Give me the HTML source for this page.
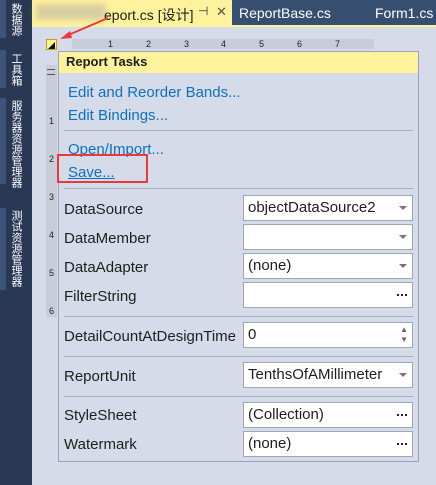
<!DOCTYPE html>
<html><head><meta charset="utf-8"><style>
*{margin:0;padding:0;box-sizing:border-box}
body{width:436px;height:485px;overflow:hidden;background:#d6dbe9;font-family:"Segoe UI","Liberation Sans","Noto Sans CJK SC",sans-serif;position:relative}
.a{position:absolute}
.side{left:0;top:0;width:32px;height:485px;background:#293955}
.st{left:0;width:6px;background:#3f5278}
.vt{left:11px;writing-mode:vertical-rl;color:#fff;font-size:11px;font-family:"Noto Sans CJK SC",sans-serif;line-height:12px}
.lbl{left:64px;font-size:15px;color:#1e1e1e}
.box{left:243px;width:170px;height:26px;background:#fff;border:1px solid #a0a8b8;font-size:15px;color:#1e1e1e;padding:3px 0 0 4px;line-height:18px}
.dd::after{content:"";position:absolute;right:5px;top:10px;border-left:4px solid transparent;border-right:4px solid transparent;border-top:4px solid #777}
.el::after{content:"";position:absolute;right:5px;top:11px;width:2px;height:2px;background:#222;box-shadow:-4px 0 #222,-8px 0 #222}
.sep{left:64px;width:349px;height:1px;background:#a8b0c0}
.lk{left:68px;font-size:15px;color:#0e70c0}
</style></head><body>
<div class="a side"></div>
<div class="a st" style="top:0;height:38px"></div>
<div class="a st" style="top:50px;height:38px"></div>
<div class="a st" style="top:98px;height:86px"></div>
<div class="a st" style="top:208px;height:82px"></div>
<div class="a vt" style="top:3px">数据源</div>
<div class="a vt" style="top:53px">工具箱</div>
<div class="a vt" style="top:100px">服务器资源管理器</div>
<div class="a vt" style="top:210px">测试资源管理器</div>
<div class="a" style="left:32px;top:0;width:404px;height:25px;background:#364e6f"></div>
<div class="a" style="left:32px;top:0;width:200px;height:25px;background:#fff29d"></div>
<div class="a" style="left:32px;top:25px;width:404px;height:2px;background:#fff29d"></div>
<div class="a" style="left:36px;top:4px;width:70px;height:16px;background:#d8cfa0;filter:blur(3px)"></div>
<div class="a" style="left:104px;top:5px;font-size:14px;color:#1e1e1e">eport.cs [设计]</div>
<div class="a" style="left:198px;top:4px;font-size:12px;color:#333">⊣</div>
<div class="a" style="left:216px;top:4px;font-size:13px;color:#555">✕</div>
<div class="a" style="left:239px;top:5px;font-size:14px;color:#fff">ReportBase.cs</div>
<div class="a" style="left:375px;top:5px;font-size:14px;color:#fff">Form1.cs</div>
<svg class="a" style="left:0;top:0" width="436" height="485"><line x1="108" y1="18" x2="66" y2="36" stroke="#e83a3a" stroke-width="2"/><polygon points="60,39 70,31 72,38" fill="#e83a3a"/></svg>
<div class="a" style="left:46px;top:39px;width:11px;height:11px;background:#fff29d;border:1px solid #c9a400"></div>
<div class="a" style="left:48px;top:42px;width:0;height:0;border-left:7px solid transparent;border-bottom:7px solid #111"></div>
<div class="a" style="left:72px;top:39px;width:302px;height:10px;background:#c8cdd9;font-size:9px;color:#222;line-height:10px;word-spacing:0">
<span style="position:absolute;left:36px">1</span><span style="position:absolute;left:74px">2</span><span style="position:absolute;left:112px">3</span><span style="position:absolute;left:149px">4</span><span style="position:absolute;left:187px">5</span><span style="position:absolute;left:225px">6</span><span style="position:absolute;left:263px">7</span></div>
<div class="a" style="left:46px;top:65px;width:11px;height:252px;background:#c8cdd9;font-size:9px;color:#222;text-align:center">
<div style="position:absolute;top:4px;left:1px;width:8px;height:6px;border-top:1px solid #555;border-bottom:1px solid #555"></div>
<span style="position:absolute;top:51px;left:3px">1</span><span style="position:absolute;top:89px;left:3px">2</span><span style="position:absolute;top:127px;left:3px">3</span><span style="position:absolute;top:165px;left:3px">4</span><span style="position:absolute;top:203px;left:3px">5</span><span style="position:absolute;top:241px;left:3px">6</span></div>
<div class="a" style="left:58px;top:51px;width:361px;height:411px;background:#d6dbe9;border:1px solid #9aa4b6"></div>
<div class="a" style="left:59px;top:52px;width:359px;height:21px;background:#fff29d;font-size:13px;font-weight:bold;color:#1e1e1e;padding:2px 0 0 7px">Report Tasks</div>
<div class="a lk" style="top:84px">Edit and Reorder Bands...</div>
<div class="a lk" style="top:107px">Edit Bindings...</div>
<div class="a sep" style="top:130px"></div>
<div class="a lk" style="top:141px">Open/Import...</div>
<div class="a lk" style="top:164px;text-decoration:underline">Save...</div>
<div class="a" style="left:57px;top:154px;width:91px;height:29px;border:2px solid #e83a3a"></div>
<div class="a sep" style="top:188px"></div>
<div class="a lbl" style="top:201px">DataSource</div><div class="a box dd" style="top:195px">objectDataSource2</div>
<div class="a lbl" style="top:230px">DataMember</div><div class="a box dd" style="top:224px"></div>
<div class="a lbl" style="top:259px">DataAdapter</div><div class="a box dd" style="top:253px">(none)</div>
<div class="a lbl" style="top:288px">FilterString</div><div class="a box el" style="top:282px"></div>
<div class="a sep" style="top:316px"></div>
<div class="a lbl" style="top:328px">DetailCountAtDesignTime</div><div class="a box" style="top:322px">0<span style="position:absolute;right:4px;top:2px;font-size:8px;color:#666;line-height:10px">▲<br>▼</span></div>
<div class="a sep" style="top:356px"></div>
<div class="a lbl" style="top:368px">ReportUnit</div><div class="a box dd" style="top:362px">TenthsOfAMillimeter</div>
<div class="a sep" style="top:396px"></div>
<div class="a lbl" style="top:407px">StyleSheet</div><div class="a box el" style="top:402px">(Collection)</div>
<div class="a lbl" style="top:436px">Watermark</div><div class="a box el" style="top:431px">(none)</div>
</body></html>
